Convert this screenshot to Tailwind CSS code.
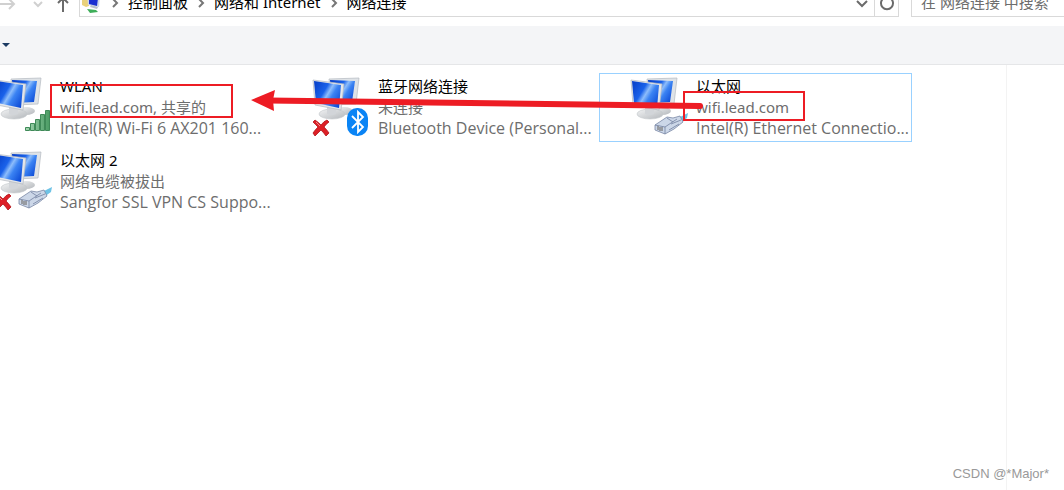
<!DOCTYPE html>
<html lang="zh-CN">
<head>
    <meta charset="UTF-8">
    <title>网络连接</title>
    <script src="https://cdn.jsdelivr.net/npm/@tailwindcss/browser@4"></script>
</head>
<body class="bg-white overflow-hidden text-[15px] leading-[21px] text-black font-['Noto_Sans','Noto_Sans_CJK_SC',sans-serif]">

<!-- shared icon parts -->
<svg class="absolute w-0 h-0">
    <defs>
        <linearGradient id="screen" x1="0" y1=".2" x2="1" y2=".8">
            <stop offset="0" stop-color="#0a44cc"/>
            <stop offset=".35" stop-color="#1a62ea"/>
            <stop offset=".5" stop-color="#8dbdfb"/>
            <stop offset=".65" stop-color="#3b83f3"/>
            <stop offset="1" stop-color="#0c4ad6"/>
        </linearGradient>
        <linearGradient id="stand" x1="0" y1="0" x2="1" y2="1">
            <stop offset="0" stop-color="#f2f3f4"/>
            <stop offset="1" stop-color="#b4b8bc"/>
        </linearGradient>
        <linearGradient id="bar" x1="0" y1="0" x2="1" y2="0">
            <stop offset="0" stop-color="#a5d6b2"/>
            <stop offset="1" stop-color="#4b9c64"/>
        </linearGradient>
    </defs>
    <symbol id="monitors" viewBox="0 0 60 62">
        <ellipse cx="32" cy="35" rx="9" ry="4" fill="url(#stand)"/>
        <path d="M17 3l30-1-3 26-24 1z" fill="#dfe3e7" stroke="#b3b9c0" stroke-width=".7"/>
        <path d="M18 4l25 1-3 21-20 1z" fill="url(#screen)"/>
        <ellipse cx="20" cy="38" rx="13" ry="5" fill="url(#stand)" stroke="#c3c7cb" stroke-width=".6"/>
        <path d="M15 29l9 2v7q-4 2-9 0z" fill="#d2d5d9"/>
        <path d="M1 4l31 4-3 26L3 29z" fill="#e3e6ea" stroke="#b3b9c0" stroke-width=".7"/>
        <path d="M2 5l27 4-2 23L4 27z" fill="url(#screen)"/>
    </symbol>
    <symbol id="cable" viewBox="0 0 60 62">
        <path d="M46 43l12-6-1 5-7 5z" fill="#6fc3e6"/>
        <path d="M25 49l12-8 6 1 7-2 3 6-9 7-9 5-10-4z" fill="#ccd7e8" stroke="#7987a4" stroke-width=".8"/>
        <path d="M25 49l10 2 12-8M35 51v7M37 42l6 4M41 48l10-4M39 54l10-6" fill="none" stroke="#7280a0" stroke-width=".8"/>
        <path d="M28 50v4M30 51v4M32 51v4" fill="none" stroke="#64605c"/>
    </symbol>
    <symbol id="cross" viewBox="0 0 18 18">
        <path d="M3 1q3 2 6 5 3-4 6-5l2 2q-3 2-5 5 3 3 5 6l-3 3q-2-3-5-6-3 3-6 6l-2-3q2-3 5-6-3-3-5-5z" fill="#dd1f26" stroke="#b0151b" stroke-width=".8"/>
        <path d="M4 3l4 4" stroke="#f08a8a"/>
    </symbol>
</svg>

<!-- address row, scrolled partly out of the window -->
<header class="flex -mt-3 h-[29px] mb-[9px] items-stretch">
    <nav class="flex w-[79px] shrink-0 items-center text-[#d0d0d0]">
        <button aria-label="前进" class="w-4">
            <svg class="w-4 h-4" viewBox="0 0 16 16" fill="none" stroke="currentColor" stroke-width="2"><path d="M-2 9h16M9 4l5 5-5 5"/></svg>
        </button>
        <button aria-label="最近" class="ml-4">
            <svg class="w-3 h-4" viewBox="0 0 12 16" fill="none" stroke="currentColor" stroke-width="2"><path d="M2 7l4 4 4-4"/></svg>
        </button>
        <button aria-label="上移" class="ml-3 text-[#6b6b6b]">
            <svg class="w-4 h-5" viewBox="0 0 16 20" fill="none" stroke="currentColor" stroke-width="2"><path d="M7 19V5M2 10l5-5 5 5"/></svg>
        </button>
    </nav>
    <div class="flex flex-1 items-center border border-[#d9d9d9]">
        <svg class="ml-0.5 w-5 h-5" viewBox="0 0 20 20">
            <path d="M0 3h7v10l-3 1-4-2z" fill="#e9d27a"/>
            <path d="M5 2l13 2-1 10-11-2z" fill="#cfd8e8"/>
            <path d="M7 4l9 1-1 8-8-2z" fill="#1a2fd0"/>
            <path d="M9 12l7 2-1 2-7-2z" fill="#b9c0cc"/>
            <path d="M5 16l9 1 2 2-8 1z" fill="#3fae5a"/>
        </svg>
        <ol class="flex flex-1 items-center">
            <li class="flex items-center"><svg class="mx-[7px] w-3 h-3" viewBox="0 0 12 12" fill="none" stroke="#777" stroke-width="2"><path d="M4 2l4 4-4 4"/></svg><a href="#">控制面板</a></li>
            <li class="flex items-center"><svg class="mx-[7px] w-3 h-3" viewBox="0 0 12 12" fill="none" stroke="#777" stroke-width="2"><path d="M4 2l4 4-4 4"/></svg><a href="#">网络和 Internet</a></li>
            <li class="flex items-center"><svg class="mx-[7px] w-3 h-3" viewBox="0 0 12 12" fill="none" stroke="#777" stroke-width="2"><path d="M4 2l4 4-4 4"/></svg><a href="#">网络连接</a></li>
        </ol>
        <button aria-label="历史" class="px-1">
            <svg class="w-4 h-4" viewBox="0 0 16 16" fill="none" stroke="#6b6b6b" stroke-width="2"><path d="M3 6l5 5 5-5"/></svg>
        </button>
        <button aria-label="刷新" class="flex h-full w-6 items-center justify-center border-l border-[#d9d9d9]">
            <svg class="w-4 h-4" viewBox="0 0 16 16" fill="none" stroke="#6b6b6b" stroke-width="2"><path d="M11 3a6 6 0 1 1-6 0M5 0v4H1"/></svg>
        </button>
    </div>
    <input type="search" aria-label="搜索" placeholder="在 网络连接 中搜索"
           class="ml-3 w-[160px] -mr-[7px] border border-[#d9d9d9] pl-[9px] placeholder:text-[#6d6d6d]">
</header>

<div class="flex h-[39px] items-center border-b border-[#e5e6e8] bg-[#f4f5f7]">
    <button aria-label="组织" class="ml-0.5">
        <svg class="w-2 h-1" viewBox="0 0 8 4"><path d="M0 0h8L4 4z" fill="#1b3a63"/></svg>
    </button>
</div>

<main class="relative flex">
    <ul class="-ml-[37px] mt-2 grid flex-1 grid-cols-[repeat(3,313px)] content-start gap-[5px]">
        <li class="flex border border-transparent py-0.5 pl-[30px]">
            <svg class="w-[60px] h-[62px] mr-[6px] shrink-0" viewBox="0 0 60 62">
                <use href="#monitors"/>
                <path d="M31.500 51.500h4v3h-4zM36.500 47.500h4v7h-4zM41.500 43.500h4v11h-4zM46.500 38.500h4v16h-4zM51.500 34.500h4v20h-4z" fill="url(#bar)" stroke="#3f8a58"/>
            </svg>
            <div class="whitespace-nowrap text-[#6d6d6d]">
                <h2 class="text-black">WLAN</h2>
                <p>wifi.lead.com, 共享的</p>
                <p class="text-[16px] leading-[21px] font-['Open_Sans',sans-serif]">Intel(R) Wi-Fi 6 AX201 160...</p>
            </div>
        </li>
        <li class="flex border border-transparent py-0.5 pl-[30px]">
            <svg class="w-[60px] h-[62px] mr-[6px] shrink-0" viewBox="0 0 60 62">
                <use href="#monitors"/>
                <use href="#cross" x="0" y="43" width="18" height="18"/>
                <rect x="35" y="32" width="21" height="28" rx="10" fill="#0a84f5"/>
                <path d="M40 40l11 11-5 5V36l5 5-11 11" fill="none" stroke="#fff" stroke-width="1.800"/>
            </svg>
            <div class="whitespace-nowrap text-[#6d6d6d]">
                <h2 class="text-black">蓝牙网络连接</h2>
                <p>未连接</p>
                <p class="text-[16px] leading-[21px] font-['Open_Sans',sans-serif]">Bluetooth Device (Personal...</p>
            </div>
        </li>
        <li class="flex border border-[#99d1ff] py-0.5 pl-[30px]">
            <svg class="w-[60px] h-[62px] mr-[6px] shrink-0" viewBox="0 0 60 62">
                <use href="#monitors"/>
                <use href="#cable"/>
            </svg>
            <div class="whitespace-nowrap text-[#6d6d6d]">
                <h2 class="text-black">以太网</h2>
                <p>wifi.lead.com</p>
                <p class="text-[16px] leading-[21px] font-['Open_Sans',sans-serif]">Intel(R) Ethernet Connectio...</p>
            </div>
        </li>
        <li class="flex border border-transparent py-0.5 pl-[30px]">
            <svg class="w-[60px] h-[62px] mr-[6px] shrink-0" viewBox="0 0 60 62">
                <use href="#monitors"/>
                <use href="#cross" x="0" y="43" width="18" height="18"/>
                <use href="#cable"/>
            </svg>
            <div class="whitespace-nowrap text-[#6d6d6d]">
                <h2 class="text-black">以太网 2</h2>
                <p>网络电缆被拔出</p>
                <p class="text-[16px] leading-[21px] font-['Open_Sans',sans-serif]">Sangfor SSL VPN CS Suppo...</p>
            </div>
        </li>
    </ul>
    <aside class="min-h-[425px] w-[58px] border-l border-[#f3f3f3]"></aside>

    <!-- red marks drawn over the list -->
    <svg class="absolute left-0 top-0 h-20 w-[912px]" viewBox="0 0 912 80" fill="none" stroke="#ed1c24" stroke-width="2">
        <path d="M51 20h181v32H51zM684 27h120v28H684z"/>
        <path d="M268 35.500L700 41" stroke-width="6" stroke-linecap="round"/>
        <path d="M251 35l24-10-2 10 1 11z" fill="#ed1c24" stroke="none"/>
    </svg>
    <p class="absolute right-[15px] bottom-[6px] text-[13px] text-[#999] font-['Liberation_Sans',sans-serif]">CSDN @*Major*</p>
</main>
</body>
</html>
